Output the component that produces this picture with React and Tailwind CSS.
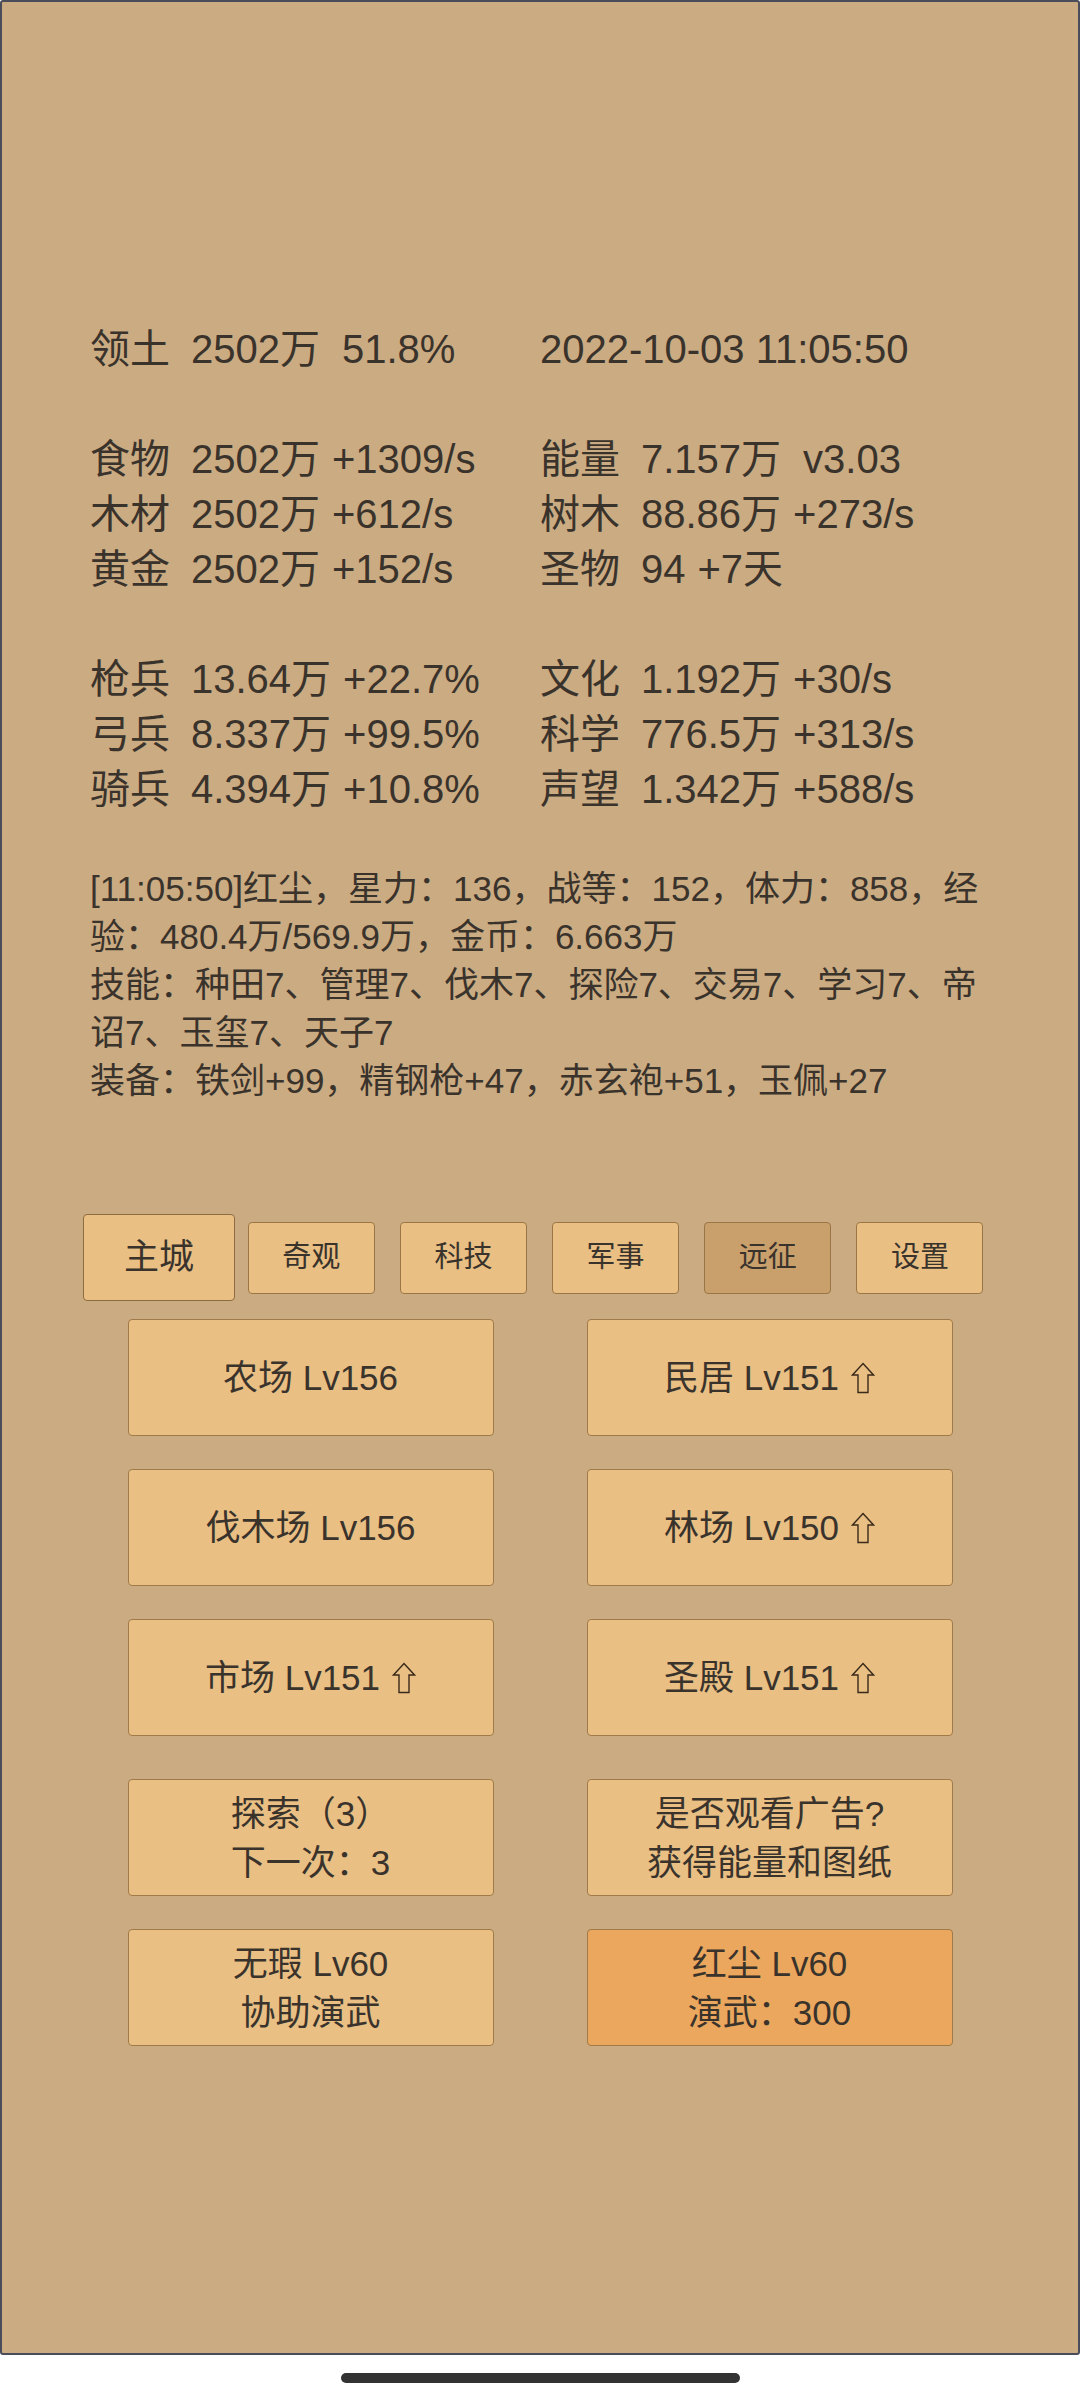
import React from 'react';

const font = { fontFamily: '"Liberation Sans", "Noto Sans CJK SC", sans-serif' };

// stat rows: [label, value, rest, doubleGap]
const rows = [
  [['领土', '2502万', '51.8%', true], [null, '2022-10-03 11:05:50']],
  null,
  [['食物', '2502万', '+1309/s'], ['能量', '7.157万', 'v3.03', true]],
  [['木材', '2502万', '+612/s'], ['树木', '88.86万', '+273/s']],
  [['黄金', '2502万', '+152/s'], ['圣物', '94', '+7天']],
  null,
  [['枪兵', '13.64万', '+22.7%'], ['文化', '1.192万', '+30/s']],
  [['弓兵', '8.337万', '+99.5%'], ['科学', '776.5万', '+313/s']],
  [['骑兵', '4.394万', '+10.8%'], ['声望', '1.342万', '+588/s']],
];

function Stat({ item }) {
  const [label, value, rest, wide] = item;
  if (!label) return <div className="whitespace-nowrap">{value}</div>;
  return (
    <div className="flex whitespace-nowrap">
      <span className="w-[101px]">{label}</span>
      <span>{value}</span>
      {rest && <span className={wide ? 'ml-[22px]' : 'ml-[12px]'}>{rest}</span>}
    </div>
  );
}

function UpArrow() {
  return (
    <svg width="24" height="32" viewBox="0 0 24 32" className="ml-[12px] shrink-0">
      <path
        d="M12 1.5 L22.5 13 L17 13 L17 30.5 L7 30.5 L7 13 L1.5 13 Z"
        fill="none"
        stroke="#3a2a1a"
        strokeWidth="1.4"
        strokeLinejoin="miter"
      />
    </svg>
  );
}

function Btn({ children, orange }) {
  return (
    <div
      className={`w-[366px] h-[117px] flex flex-col items-center justify-center rounded-[4px] border border-[#a07a48] text-[35px] leading-[49px] ${
        orange ? 'bg-[#eaa75d]' : 'bg-[#e9bf84]'
      }`}
    >
      {children}
    </div>
  );
}

const tabs = ['主城', '奇观', '科技', '军事', '远征', '设置'];

export default function App() {
  return (
    <div className="w-[1080px] h-[2400px] bg-white" style={font}>
      <div className="h-[2355px] border-2 border-[#4b4c5a] rounded-[3px] bg-[#cbab82] text-[#3a332c]">
        {/* stats */}
        <div className="pt-[320px] pl-[88px] text-[40px] leading-[55px]">
          {rows.map((r, i) =>
            r ? (
              <div key={i} className="grid grid-cols-[450px_1fr]">
                <Stat item={r[0]} />
                <Stat item={r[1]} />
              </div>
            ) : (
              <div key={i} className="h-[55px]" />
            )
          )}
        </div>

        {/* log */}
        <div className="mt-[48px] ml-[88px] w-[905px] text-[35px] leading-[48px]">
          <p>[11:05:50]红尘，星力：136，战等：152，体力：858，经验：480.4万/569.9万，金币：6.663万</p>
          <p>技能：种田7、管理7、伐木7、探险7、交易7、学习7、帝诏7、玉玺7、天子7</p>
          <p>装备：铁剑+99，精钢枪+47，赤玄袍+51，玉佩+27</p>
        </div>

        {/* tabs */}
        <div className="mt-[109px] ml-[81px] w-[913px] h-[87px] grid grid-cols-6 items-center justify-items-center">
          {tabs.map((t, i) =>
            i === 0 ? (
              <div
                key={t}
                className="w-full h-[87px] flex items-center justify-center rounded-[4px] border border-[#8e6c40] bg-[#e9bf84] text-[35px]"
              >
                {t}
              </div>
            ) : (
              <div
                key={t}
                className={`w-[127px] h-[72px] flex items-center justify-center rounded-[4px] border border-[#9a7646] text-[29px] ${
                  t === '远征' ? 'bg-[#c9a06c]' : 'bg-[#e9bf84]'
                }`}
              >
                {t}
              </div>
            )
          )}
        </div>

        {/* buildings */}
        <div className="mt-[18px] flex justify-center">
          <div className="grid grid-cols-[366px_366px] gap-x-[93px] gap-y-[33px]">
            <Btn>农场 Lv156</Btn>
            <Btn>
              <div className="flex items-center">民居 Lv151<UpArrow /></div>
            </Btn>
            <Btn>伐木场 Lv156</Btn>
            <Btn>
              <div className="flex items-center">林场 Lv150<UpArrow /></div>
            </Btn>
            <Btn>
              <div className="flex items-center">市场 Lv151<UpArrow /></div>
            </Btn>
            <Btn>
              <div className="flex items-center">圣殿 Lv151<UpArrow /></div>
            </Btn>
          </div>
        </div>

        <div className="mt-[43px] flex justify-center">
          <div className="grid grid-cols-[366px_366px] gap-x-[93px] gap-y-[33px]">
            <Btn>
              <div>探索（3）</div>
              <div>下一次：3</div>
            </Btn>
            <Btn>
              <div>是否观看广告?</div>
              <div>获得能量和图纸</div>
            </Btn>
            <Btn>
              <div>无瑕 Lv60</div>
              <div>协助演武</div>
            </Btn>
            <Btn orange>
              <div>红尘 Lv60</div>
              <div>演武：300</div>
            </Btn>
          </div>
        </div>
      </div>

      <div className="mt-[18px] flex justify-center">
        <div className="w-[399px] h-[10px] rounded-full bg-[#333333]" />
      </div>
    </div>
  );
}
